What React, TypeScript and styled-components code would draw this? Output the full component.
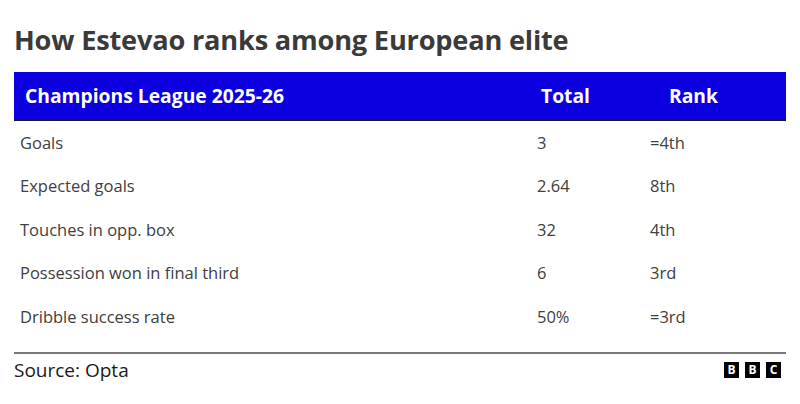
import React from "react";
import styled, { createGlobalStyle } from "styled-components";

const GlobalStyle = createGlobalStyle`
    html, body {
        margin: 0;
        padding: 0;
        background: #ffffff;
        font-family: "Open Sans", "Liberation Sans", sans-serif;
    }
`;

const Page = styled.div`
    width: 800px;
    height: 404px;
    padding: 22px 14px 0 14px;
    box-sizing: border-box;
    display: flex;
    flex-direction: column;
`;

const Title = styled.h1`
    margin: 0;
    font-size: 27.2px;
    line-height: 36px;
    font-weight: 700;
    color: #3a3a3a;
    letter-spacing: -0.2px;
`;

const Table = styled.div`
    margin-top: 14px;
    display: flex;
    flex-direction: column;
    border-bottom: 2px solid #7a7a7a;
    padding-bottom: 13px;
`;

const HeaderRow = styled.div`
    display: grid;
    grid-template-columns: 516px 126px 1fr;
    align-items: center;
    height: 47px;
    background: #0c00e0;
    border-bottom: 2px solid #1a1a2a;
    color: #ffffff;
    font-size: 19.3px;
    font-weight: 700;
`;

const HeadCell = styled.div<{ $pad: number }>`
    padding-left: ${({ $pad }) => $pad}px;
`;

const Row = styled.div`
    display: grid;
    grid-template-columns: 523px 113px 1fr;
    align-items: center;
    height: 43.6px;
    font-size: 16.5px;
    color: #404040;
    line-height: 1;
`;

const Cell = styled.div<{ $pad?: number }>`
    padding-left: ${({ $pad }) => $pad ?? 0}px;
`;

const Footer = styled.div`
    display: flex;
    align-items: center;
    justify-content: space-between;
    padding-top: 3px;
`;

const Source = styled.div`
    font-size: 19px;
    color: #1a1a1a;
`;

const Logo = styled.div`
    display: flex;
    gap: 6px;
    margin-right: 5px;
`;

const LogoBlock = styled.span`
    width: 15px;
    height: 16px;
    background: #000000;
    color: #ffffff;
    font-size: 12px;
    font-weight: 700;
    display: flex;
    align-items: center;
    justify-content: center;
    line-height: 1;
`;

const rows = [
    ["Goals", "3", "=4th"],
    ["Expected goals", "2.64", "8th"],
    ["Touches in opp. box", "32", "4th"],
    ["Possession won in final third", "6", "3rd"],
    ["Dribble success rate", "50%", "=3rd"],
];

export default function App() {
    return (
        <>
            <GlobalStyle />
            <Page>
                <Title>How Estevao ranks among European elite</Title>
                <Table>
                    <HeaderRow>
                        <HeadCell $pad={11}>Champions League 2025-26</HeadCell>
                        <HeadCell $pad={11}>Total</HeadCell>
                        <HeadCell $pad={13}>Rank</HeadCell>
                    </HeaderRow>
                    {rows.map((r) => (
                        <Row key={r[0]}>
                            <Cell $pad={6}>{r[0]}</Cell>
                            <Cell>{r[1]}</Cell>
                            <Cell>{r[2]}</Cell>
                        </Row>
                    ))}
                </Table>
                <Footer>
                    <Source>Source: Opta</Source>
                    <Logo>
                        <LogoBlock>B</LogoBlock>
                        <LogoBlock>B</LogoBlock>
                        <LogoBlock>C</LogoBlock>
                    </Logo>
                </Footer>
            </Page>
        </>
    );
}
